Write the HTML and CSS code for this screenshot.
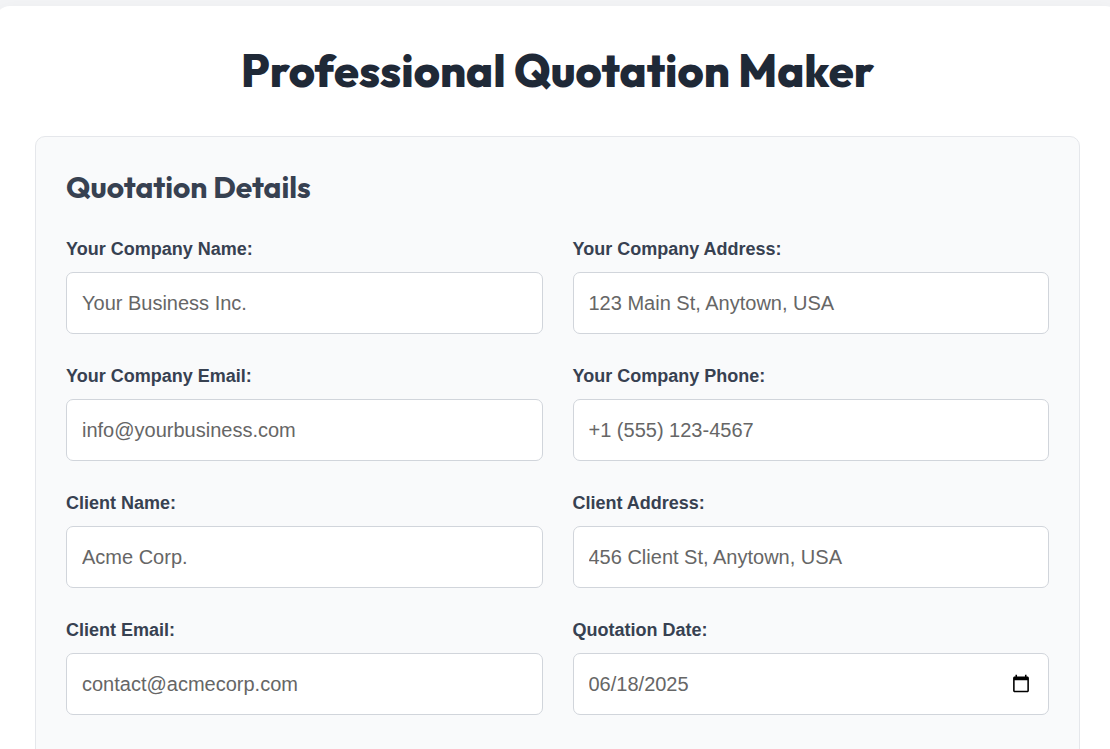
FILE: index.html
```html
<!DOCTYPE html>
<html lang="en">

<head>
	<meta charset="utf-8">
	<meta name="viewport" content="width=device-width, initial-scale=1.0">
	<title>Professional Quotation Maker</title>
	<link rel="stylesheet" href="styles.css">
</head>

<body>
	<main class="container">
		<h1>Professional Quotation Maker</h1>

		<form class="section">
			<h2>Quotation Details</h2>
			<div class="form-grid">
				<div class="form-group">
					<label for="companyName">Your Company Name:</label>
					<input type="text" id="companyName" placeholder="Your Business Inc.">
				</div>
				<div class="form-group">
					<label for="companyAddress">Your Company Address:</label>
					<input type="text" id="companyAddress" placeholder="123 Main St, Anytown, USA">
				</div>
				<div class="form-group">
					<label for="companyEmail">Your Company Email:</label>
					<input type="email" id="companyEmail" placeholder="info@yourbusiness.com">
				</div>
				<div class="form-group">
					<label for="companyPhone">Your Company Phone:</label>
					<input type="tel" id="companyPhone" placeholder="+1 (555) 123-4567">
				</div>
				<div class="form-group">
					<label for="clientName">Client Name:</label>
					<input type="text" id="clientName" placeholder="Acme Corp.">
				</div>
				<div class="form-group">
					<label for="clientAddress">Client Address:</label>
					<input type="text" id="clientAddress" placeholder="456 Client St, Anytown, USA">
				</div>
				<div class="form-group">
					<label for="clientEmail">Client Email:</label>
					<input type="email" id="clientEmail" placeholder="contact@acmecorp.com">
				</div>
				<div class="form-group">
					<label for="quotationDate">Quotation Date:</label>
					<input type="date" id="quotationDate" value="2025-06-18">
				</div>
			</div>
		</form>
	</main>
</body>

</html>
```
FILE: styles.css
```css
* {
	box-sizing: border-box;
}

body {
	margin: 0;
	padding-top: 6px;
	height: 100vh;
	overflow: hidden;
	background-color: #f3f4f6;
	font-family: "Liberation Sans", Arial, sans-serif;
	color: #374151;
}

.container {
	margin: 0 -10px 0 -5px;
	padding: 40px;
	background-color: #fff;
	border-radius: 15px;
	box-shadow: 0 5px 20px rgba(0, 0, 0, 0.05);
}

h1,
h2 {
	font-family: Outfit, Lato, sans-serif;
}

h1 {
	margin: 0 0 40px;
	font-size: 45px;
	font-weight: 800;
	line-height: 50px;
	text-align: center;
	color: #1f2937;
}

h2 {
	margin: 0 0 30px;
	font-size: 30px;
	font-weight: 700;
	line-height: 40px;
}

.section {
	min-height: 100vh;
	padding: 30px;
	background-color: #f9fafb;
	border: 1px solid #e5e7eb;
	border-radius: 10px;
}

.form-grid {
	display: grid;
	grid-template-columns: 1fr 1fr;
	gap: 30px;
}

.form-group {
	display: flex;
	flex-direction: column;
	gap: 10px;
}

label {
	font-size: 18px;
	font-weight: bold;
	line-height: 25px;
}

input {
	width: 100%;
	height: 62px;
	padding: 15px;
	border: 1px solid #d1d5db;
	border-radius: 7px;
	background-color: #fff;
	font-family: inherit;
	font-size: 20px;
	color: #666;
}

input::placeholder {
	color: #666;
}

input::-webkit-datetime-edit-month-field,
input::-webkit-datetime-edit-day-field,
input::-webkit-datetime-edit-year-field {
	padding: 0;
}
```
